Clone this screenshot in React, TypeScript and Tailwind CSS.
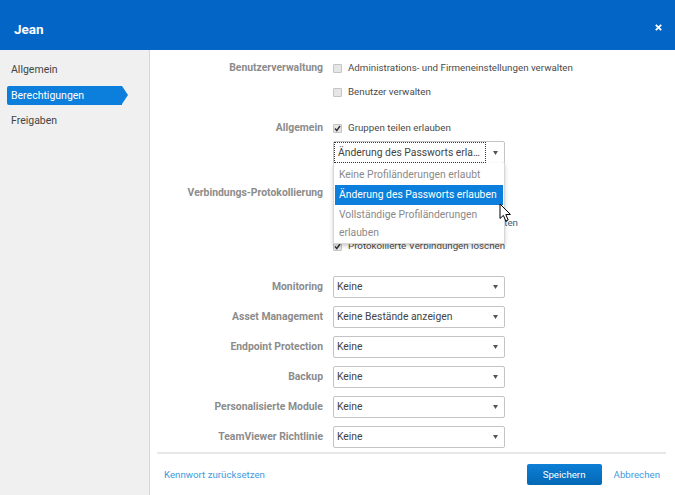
const font = { fontFamily: 'Roboto, sans-serif' };

function Check({ checked = false }: { checked?: boolean }) {
  return (
    <span className="flex h-[9px] w-[9px] shrink-0 items-center justify-center rounded-[1px] border border-[#c4c4c4] bg-[#e6e6e6]">
      {checked && (
        <svg width="7" height="7" viewBox="0 0 7 7" className="block">
          <path d="M1 3.6 L2.8 5.6 L6 1" fill="none" stroke="#333" strokeWidth="1.5" />
        </svg>
      )}
    </span>
  );
}

function Arrow() {
  return (
    <svg width="5" height="4" viewBox="0 0 5 4" className="block">
      <path d="M0 0 H5 L2.5 4 Z" fill="#555" />
    </svg>
  );
}

function Label({ children }: { children?: React.ReactNode }) {
  return (
    <div className="w-[173px] shrink-0 text-right text-[10.4px] font-bold leading-[14px] text-[#8c8c8c]">{children}</div>
  );
}

function CheckRow({ label, text, checked, className = "" }: { label?: string; text: string; checked?: boolean; className?: string }) {
  return (
    <div className={`flex h-[14px] items-center gap-[10px] ${className}`}>
      <Label>{label}</Label>
      <div className="flex items-center gap-[6px]">
        <Check checked={checked} />
        <span className="text-[9.75px] leading-[14px] text-[#4a4a4a]">{text}</span>
      </div>
    </div>
  );
}

function SelectRow({ label, value }: { label: string; value: string }) {
  return (
    <div className="mb-2 flex h-[22px] items-center gap-[10px]">
      <Label>{label}</Label>
      <div className="flex h-[22px] w-[172px] items-center justify-between rounded-[2px] border border-[#c4c4c4] bg-white pb-px pl-[3px] pr-[6px]">
        <span className="text-[10.35px] leading-[14px] text-[#444]">{value}</span>
        <Arrow />
      </div>
    </div>
  );
}

export default function App() {
  return (
    <div style={font} className="flex h-[495px] w-[675px] flex-col overflow-hidden bg-white">
      <header className="flex h-[50px] shrink-0 items-end justify-between bg-[#0366c6] pb-[13px] pl-[14px] pr-[13px] text-white">
        <span className="text-[13.5px] font-bold leading-[16px]">Jean</span>
        <svg width="7" height="7" viewBox="0 0 7 7" className="mb-[6px] block">
          <path d="M0.8 0.8 L6.2 6.2 M6.2 0.8 L0.8 6.2" stroke="#fff" strokeWidth="1.8" />
        </svg>
      </header>
      <div className="flex min-h-0 flex-1">
        <aside className="w-[150px] shrink-0 border-r border-[#d6d6d6] bg-[#f0f0f0] pl-[7px] pt-[10px] text-[10.5px] text-[#444]">
          <div className="flex h-[19px] items-center pl-[4px]">Allgemein</div>
          <div className="relative mt-[7px] flex h-[19px] w-[115px] items-center rounded-l-[2px] bg-[#0c7fdc] pl-[4px] text-white">
            Berechtigungen
            <span className="absolute left-full top-0 h-0 w-0 border-y-[9.5px] border-l-[6px] border-y-transparent border-l-[#0c7fdc]" />
          </div>
          <div className="mt-[6px] flex h-[19px] items-center pl-[4px]">Freigaben</div>
        </aside>
        <div className="flex min-w-0 flex-1 flex-col">
          <main className="relative h-[402px] shrink-0 pt-[11px]">
            <CheckRow label="Benutzerverwaltung" text="Administrations- und Firmeneinstellungen verwalten" />
            <CheckRow text="Benutzer verwalten" className="mt-[10px]" />
            <CheckRow label="Allgemein" text="Gruppen teilen erlauben" checked className="mt-[22px]" />
            <div className="mt-[6px] flex h-[22px] gap-[10px]">
              <Label />
              <div className="flex h-[23px] w-[172px] rounded-[2px] border border-[#c4c4c4] bg-white">
                <div className="flex min-w-0 flex-1 items-center border border-dotted border-[#333] pl-[3px] text-[10.35px] text-[#444]">
                  <span className="truncate">Änderung des Passworts erlauben</span>
                </div>
                <div className="flex w-[18px] shrink-0 items-center justify-center"><Arrow /></div>
              </div>
            </div>
            <CheckRow label="Verbindungs-Protokollierung" text="" className="mt-[23px]" />
            <div className="mt-[16px] flex h-[14px] gap-[10px]">
              <Label />
              <div className="w-[185px] text-right text-[9.75px] leading-[14px] text-[#4a5a6a]">ten</div>
            </div>
            <CheckRow text="Protokollierte Verbindungen löschen" checked className="mt-[9px]" />
            <div className="mt-[23px]">
              <SelectRow label="Monitoring" value="Keine" />
              <SelectRow label="Asset Management" value="Keine Bestände anzeigen" />
              <SelectRow label="Endpoint Protection" value="Keine" />
              <SelectRow label="Backup" value="Keine" />
              <SelectRow label="Personalisierte Module" value="Keine" />
              <SelectRow label="TeamViewer Richtlinie" value="Keine" />
            </div>
            <div className="absolute left-[183px] top-[113px] w-[172px] border border-t-0 border-[#d8d8d8] bg-white p-px text-[10.35px] leading-[18px] text-[#8a8a8a] shadow-[0_2px_4px_rgba(0,0,0,0.2)]">
              <div className="pb-[1px] pl-[4px] pt-[2px]">Keine Profiländerungen erlaubt</div>
              <div className="h-[20px] bg-[#0c7fdc] pl-[4px] leading-[20px] text-white">Änderung des Passworts erlauben</div>
              <div className="pl-[4px] pt-[1px]">Vollständige Profiländerungen<br />erlauben</div>
            </div>
            <svg width="13" height="20" viewBox="0 0 13 20" className="absolute left-[349px] top-[153px] block">
              <path d="M1 1 V15.5 L4.4 12.4 L6.8 18 L9.2 17 L6.8 11.6 L11.4 11.4 Z" fill="#fff" stroke="#000" strokeWidth="1" strokeLinejoin="round" />
            </svg>
          </main>
          <footer className="ml-[7px] mr-[9px] flex flex-1 items-center justify-between border-t-2 border-[#e8e8e8] pl-[7px] pr-[6px] text-[9.7px] text-[#3d9be0]">
            <span className="pt-px">Kennwort zurücksetzen</span>
            <div className="flex items-center gap-[12px]">
              <div className="flex h-[21px] w-[75px] items-center justify-center rounded-[2px] bg-gradient-to-b from-[#0d7fd6] to-[#0468b4] pt-px text-white">Speichern</div>
              <span className="pt-px">Abbrechen</span>
            </div>
          </footer>
        </div>
      </div>
    </div>
  );
}
